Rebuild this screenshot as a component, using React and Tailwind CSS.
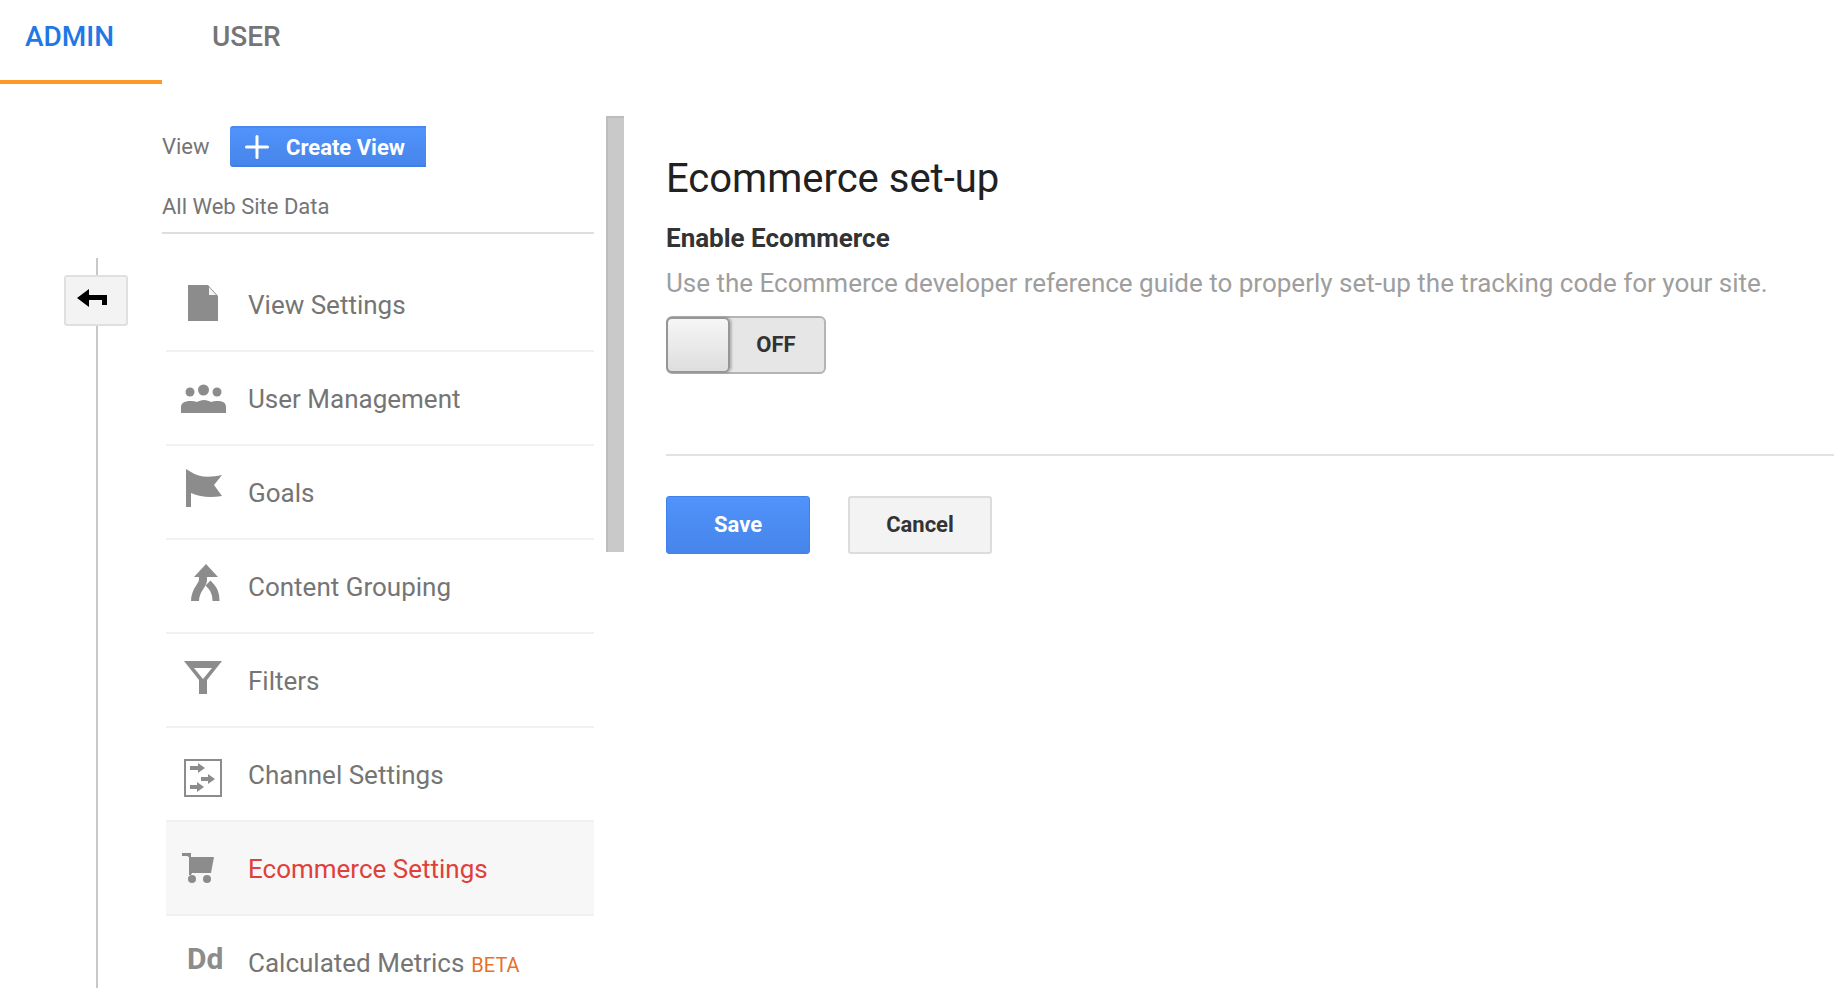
import { Plus } from 'lucide-react';

const iconFill = '#8c8c8c';

// icons are drawn in row coordinates, the slot is 82x92
const FileIcon = () => (
  <>
    <path d="M22 27h20l10 11v25H22z" fill={iconFill} />
    <path d="M43 29l7 8h-7z" fill="#f4f4f4" />
  </>
);

const UsersIcon = () => (
  <>
    <circle cx="37.5" cy="38" r="5.5" fill={iconFill} />
    <circle cx="24" cy="40" r="4.5" fill={iconFill} />
    <circle cx="51" cy="40" r="4.5" fill={iconFill} />
    <path d="M15 61v-6c0-4 4-6 9-6 3 0 5 0 7 1 2-1 4-2 7-2s5 1 7 2c2-1 4-1 7-1 5 0 8 2 8 6v6z" fill={iconFill} />
  </>
);

const FlagIcon = () => (
  <path d="M20 23l5 3c7 5 18 6 31 3l-8 10 8 11c-12 2-22 1-31-3v14h-5z" fill={iconFill} />
);

const GroupingIcon = () => (
  <>
    <path d="M40 24l12 13H28z" fill={iconFill} />
    <path d="M37 35v5c0 6-8 9-8 21" fill="none" stroke={iconFill} strokeWidth="8" />
    <path d="M42 43c4 4 8 8 8 18" fill="none" stroke={iconFill} strokeWidth="7" />
  </>
);

const FilterIcon = () => (
  <path d="M18 27h38L41 46v14h-8V46zM28 34l9 11 9-11z" fill={iconFill} fillRule="evenodd" />
);

const ChannelIcon = () => (
  <>
    <rect x="19" y="32" width="36" height="36" fill="none" stroke={iconFill} strokeWidth="2" />
    <path d="M24 38h8v-3l7 5-7 5v-3h-8z" fill={iconFill} />
    <path d="M35 49h7v-3l7 5-7 5v-3h-7z" fill={iconFill} />
    <path d="M24 57h7v-3l7 5-7 5v-3h-7z" fill={iconFill} />
  </>
);

const CartIcon = () => (
  <>
    <path d="M16 31h9v4h23l-3 16H26l-1 2h-2V35l-2-1h-5z" fill={iconFill} />
    <circle cx="26" cy="57" r="4" fill={iconFill} />
    <circle cx="41" cy="57" r="4" fill={iconFill} />
  </>
);

const MetricsIcon = () => (
  <text x="21" y="53" fontSize="30" fontWeight="700" fill={iconFill} className="font-['Roboto',sans-serif]">
    Dd
  </text>
);

const navItems = [
  { label: 'View Settings', icon: FileIcon },
  { label: 'User Management', icon: UsersIcon },
  { label: 'Goals', icon: FlagIcon },
  { label: 'Content Grouping', icon: GroupingIcon },
  { label: 'Filters', icon: FilterIcon },
  { label: 'Channel Settings', icon: ChannelIcon },
  { label: 'Ecommerce Settings', icon: CartIcon, active: true },
  { label: 'Calculated Metrics', icon: MetricsIcon, beta: true },
];

const App = () => {
  return (
    <div className="h-screen overflow-hidden bg-white flex flex-col font-['Roboto',sans-serif] text-[#757575]">
      {/* Tabs */}
      <div className="flex h-[84px] flex-shrink-0">
        <div className="w-[162px] h-full border-b-4 border-[#ff9829] flex items-center pl-[25px] pb-[7px] text-[28px] font-medium text-[#1f78e6]">
          ADMIN
        </div>
        <div className="ml-[50px] pb-[11px] h-full flex items-center text-[28px] font-medium text-[#757575]">
          USER
        </div>
      </div>

      <div className="flex flex-1 min-h-0">
        {/* Back gutter */}
        <div className="relative w-[162px] flex-shrink-0">
          <div className="absolute left-[96px] top-[174px] bottom-0 w-[2px] bg-[#c8c8c8]" />
          <button className="absolute left-[64px] top-[191px] w-[64px] h-[51px] rounded-[3px] border-2 border-[#e0e0e0] bg-[#f3f3f3] flex items-center justify-center">
            <svg width="30" height="20" viewBox="0 0 30 20" className="-ml-[8px] -mt-[5px]">
              <path d="M0 10L12 1v6h18v10h-5v-5H12v7z" fill="#000" />
            </svg>
          </button>
        </div>

        {/* Sidebar column */}
        <div className="w-[432px] flex-shrink-0 pt-[42px]">
          <div className="flex items-center h-[41px]">
            <span className="text-[22px] w-[68px]">View</span>
            <button className="w-[196px] h-[41px] pt-[1px] rounded-l-[3px] bg-gradient-to-b from-[#5093fb] to-[#4785ea] border-t-2 border-b-2 border-t-[#4a8af0] border-b-[#3f7ee6] flex items-center text-white font-bold text-[22px]">
              <Plus className="w-[36px] h-[36px] ml-[9px] mr-[11px]" strokeWidth={2} />
              Create View
            </button>
          </div>
          <div className="mt-[23px] h-[44px] text-[22px] border-b-2 border-[#dedede]">All Web Site Data</div>
          <nav className="mt-[24px] ml-1">
            {navItems.map((item) => (
              <div
                key={item.label}
                className={`flex items-center h-[94px] border-b-2 border-[#f1f1f1] ${item.active ? 'bg-[#f7f7f7]' : ''}`}
              >
                <svg width="82" height="92" viewBox="0 0 82 92" className="flex-shrink-0">
                  <item.icon />
                </svg>
                <span className={`pt-[2px] text-[26px] whitespace-nowrap ${item.active ? 'text-[#e0403a]' : ''}`}>{item.label}</span>
                {item.beta && <span className="ml-[7px] mt-[6px] text-[20px] text-[#e8702a]">BETA</span>}
              </div>
            ))}
          </nav>
        </div>

        {/* Scrollbar */}
        <div className="ml-[12px] mt-[32px] w-[18px] h-[436px] flex-shrink-0 bg-[#c9c9c9] border-l-2 border-t-2 border-[#bdbdbd]" />

        {/* Main panel */}
        <main className="flex-1 min-w-0 ml-[42px] pt-[69px]">
          <h1 className="text-[40px] leading-[52px] text-[#212121]">Ecommerce set-up</h1>
          <h2 className="mt-[17px] text-[26px] leading-[32px] font-bold text-[#333]">Enable Ecommerce</h2>
          <p className="mt-[14px] text-[26px] leading-[30px] whitespace-nowrap text-[#9e9e9e]">
            Use the Ecommerce developer reference guide to properly set-up the tracking code for your site.
          </p>
          <div className="mt-[18px] w-[160px] h-[58px] rounded-[6px] border-2 border-[#b4b4b4] bg-[#e6e6e6] flex items-center">
            <div className="w-[64px] h-[56px] -ml-[2px] rounded-[6px] border-2 border-[#969696] bg-gradient-to-b from-[#f6f6f6] to-[#dedede] shadow-[2px_0_2px_rgba(0,0,0,0.2)]" />
            <span className="flex-1 text-center text-[22px] font-bold text-[#333] pr-[2px] pb-[1px]">OFF</span>
          </div>
          <div className="mt-[80px] border-t-2 border-[#e2e2e2]" />
          <div className="mt-[40px] flex gap-[38px]">
            <button className="w-[144px] h-[58px] pb-[1px] rounded-[3px] bg-gradient-to-b from-[#5093fb] to-[#4785ea] border border-[#3f80ea] text-white font-bold text-[22px]">
              Save
            </button>
            <button className="w-[144px] h-[58px] pb-[1px] rounded-[3px] bg-[#f3f3f3] border-2 border-[#dcdcdc] text-[#333] font-bold text-[22px]">
              Cancel
            </button>
          </div>
        </main>
      </div>
    </div>
  );
};

export default App;
